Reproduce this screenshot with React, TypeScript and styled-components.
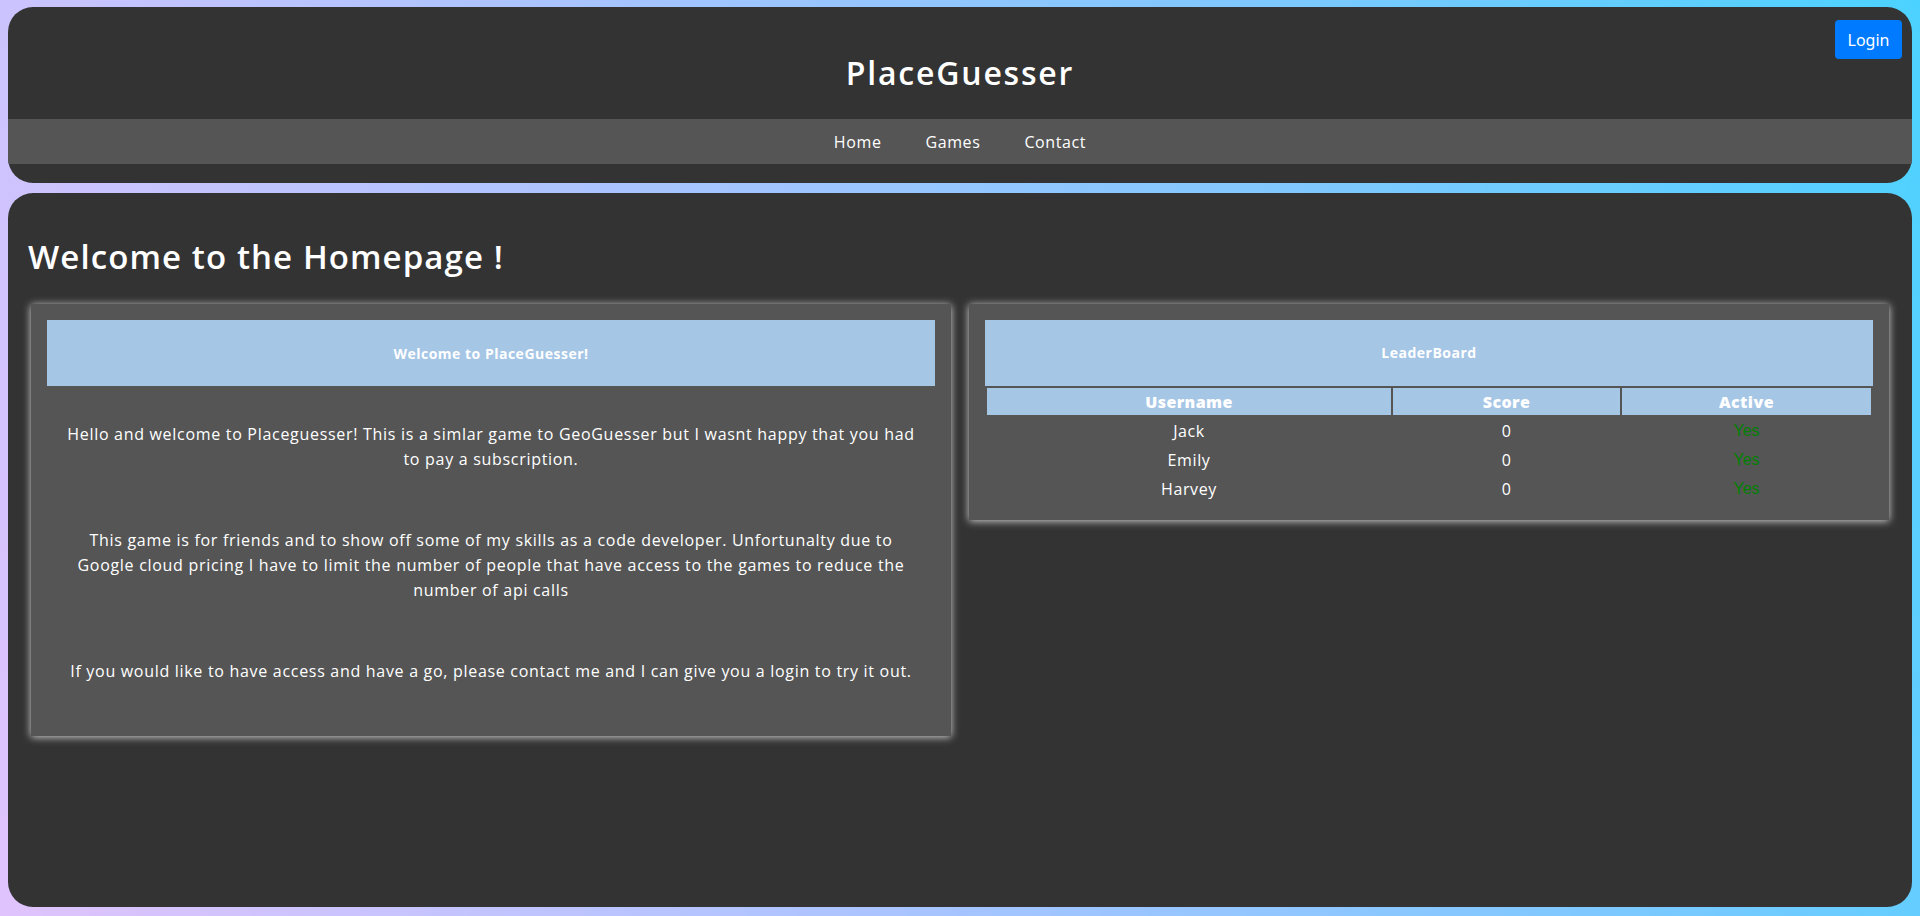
import React from 'react';
import styled, { createGlobalStyle } from 'styled-components';

const GlobalStyle = createGlobalStyle`
  * {
    box-sizing: border-box;
  }

  html, body {
    margin: 0;
    padding: 0;
  }

  body {
    min-height: 100vh;
    background: linear-gradient(70deg, #e0c3fc 0%, #a9c4ff 40%, #7fc8ff 70%, #4cd2ff 100%);
    font-family: "Open Sans", "Noto Sans", sans-serif;
    color: white;
  }
`;

const Page = styled.div`
  height: 916px;
  display: flex;
  flex-direction: column;
  gap: 10px;
  padding: 7px 8px 9px;
`;

const Header = styled.header`
  position: relative;
  background: #333333;
  border-radius: 25px;
  overflow: hidden;
  padding-bottom: 19px;
`;

const SiteTitle = styled.h1`
  margin: 0;
  height: 112px;
  padding-top: 18px;
  display: flex;
  align-items: center;
  justify-content: center;
  font-size: 32px;
  font-weight: 600;
  letter-spacing: 1.8px;
`;

const Nav = styled.nav`
  height: 45px;
  background: #555555;
  display: flex;
  align-items: center;
  justify-content: center;
  gap: 44px;
`;

const NavLink = styled.a`
  color: white;
  text-decoration: none;
  font-size: 16px;
  font-weight: 500;
  letter-spacing: 0.6px;
  cursor: pointer;
`;

const LoginButton = styled.button`
  position: absolute;
  top: 13px;
  right: 10px;
  background: #007bff;
  color: white;
  border: none;
  border-radius: 4px;
  width: 67px;
  height: 39px;
  font-family: "Noto Sans", "Open Sans", sans-serif;
  font-size: 16px;
  cursor: pointer;
`;

const Main = styled.main`
  flex: 1;
  background: #333333;
  border-radius: 25px;
  padding: 0 20px;
`;

const PageTitle = styled.h2`
  margin: 45px 0 28px;
  font-size: 33px;
  font-weight: 600;
  line-height: 38px;
  letter-spacing: 1.1px;
`;

const CardRow = styled.div`
  display: grid;
  grid-template-columns: 1fr 1fr;
  gap: 18px;
  padding: 0 3px;
  align-items: start;
`;

const Card = styled.section`
  background: #555555;
  padding: 16px;
  box-shadow: 0 1px 8px rgba(255, 255, 255, 0.8);
`;

const CardHeader = styled.div`
  height: 66px;
  background: #a6c6e6;
  display: flex;
  align-items: center;
  justify-content: center;
  font-size: 14px;
  font-weight: 700;
  letter-spacing: 0.5px;
  color: white;
`;

const CardBody = styled.div`
  padding: 36px 10px;
  display: flex;
  flex-direction: column;
  gap: 56px;
`;

const Paragraph = styled.p`
  margin: 0;
  text-align: center;
  font-size: 16px;
  line-height: 25px;
  font-weight: 500;
  letter-spacing: 0.7px;
`;

const Table = styled.table`
  width: 100%;
  table-layout: fixed;
  border-spacing: 2px;
`;

const Caption = styled.caption`
  height: 66px;
  background: #a6c6e6;
  line-height: 66px;
  font-size: 14px;
  font-weight: 700;
  letter-spacing: 0.5px;
  color: white;
`;

const Th = styled.th`
  height: 27px;
  padding: 0;
  background: #a6c6e6;
  font-size: 16px;
  font-weight: 800;
  letter-spacing: 0.4px;
  color: white;
`;

const Td = styled.td<{ $active?: boolean }>`
  height: 27px;
  padding: 0;
  text-align: center;
  font-size: 16px;
  font-weight: 500;
  letter-spacing: ${props => (props.$active ? '0' : '0.6px')};
  color: ${props => (props.$active ? '#008000' : 'white')};
  font-family: ${props => (props.$active ? '"Liberation Sans", Arial, sans-serif' : 'inherit')};
`;

const players = [
  { name: 'Jack', score: 0, active: true },
  { name: 'Emily', score: 0, active: true },
  { name: 'Harvey', score: 0, active: true },
];

const App: React.FC = () => {
  return (
    <>
      <GlobalStyle />
      <Page>
        <Header>
          <SiteTitle>PlaceGuesser</SiteTitle>
          <Nav>
            <NavLink>Home</NavLink>
            <NavLink>Games</NavLink>
            <NavLink>Contact</NavLink>
          </Nav>
          <LoginButton>Login</LoginButton>
        </Header>
        <Main>
          <PageTitle>Welcome to the Homepage !</PageTitle>
          <CardRow>
            <Card>
              <CardHeader>Welcome to PlaceGuesser!</CardHeader>
              <CardBody>
                <Paragraph>
                  Hello and welcome to Placeguesser! This is a simlar game to GeoGuesser but I wasnt happy that you had
                  <br />
                  to pay a subscription.
                </Paragraph>
                <Paragraph>
                  This game is for friends and to show off some of my skills as a code developer. Unfortunalty due to
                  <br />
                  Google cloud pricing I have to limit the number of people that have access to the games to reduce the
                  <br />
                  number of api calls
                </Paragraph>
                <Paragraph>
                  If you would like to have access and have a go, please contact me and I can give you a login to try it out.
                </Paragraph>
              </CardBody>
            </Card>
            <Card>
              <Table>
                <Caption>LeaderBoard</Caption>
                <colgroup>
                  <col style={{ width: 404 }} />
                  <col style={{ width: 227 }} />
                  <col style={{ width: 249 }} />
                </colgroup>
                <thead>
                  <tr>
                    <Th>Username</Th>
                    <Th>Score</Th>
                    <Th>Active</Th>
                  </tr>
                </thead>
                <tbody>
                  {players.map(p => (
                    <tr key={p.name}>
                      <Td>{p.name}</Td>
                      <Td>{p.score}</Td>
                      <Td $active={p.active}>{p.active ? 'Yes' : 'No'}</Td>
                    </tr>
                  ))}
                </tbody>
              </Table>
            </Card>
          </CardRow>
        </Main>
      </Page>
    </>
  );
};

export default App;
